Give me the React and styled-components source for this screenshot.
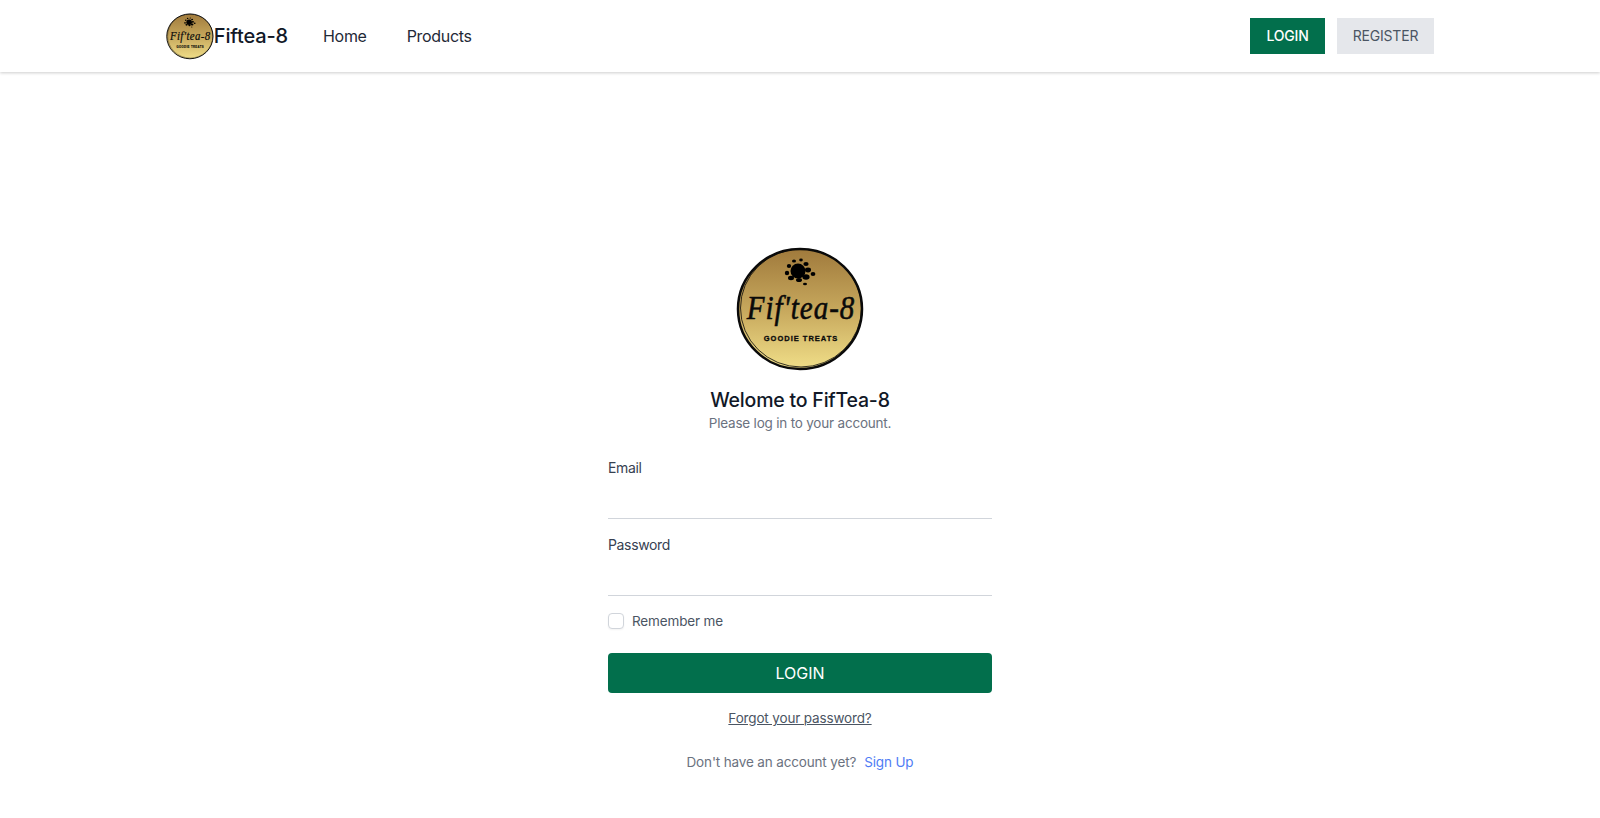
import React from 'react'
import styled, { createGlobalStyle } from 'styled-components'

const GlobalStyle = createGlobalStyle`
  html, body { margin: 0; padding: 0; background: #fff; }
  body { font-family: Inter, "Open Sans", sans-serif; color: #111827; }
  * { box-sizing: border-box; }
`

const Nav = styled.nav`
  height: 72px;
  background: #fff;
  box-shadow: 0 1px 3px 0 rgba(0, 0, 0, 0.2);
`

const NavInner = styled.div`
  width: 1280px;
  height: 100%;
  margin: 0 auto;
  padding: 0 6px;
  display: flex;
  align-items: center;
  justify-content: space-between;
`

const NavLeft = styled.div`
  display: flex;
  align-items: center;
`

const Brand = styled.a`
  display: flex;
  align-items: center;
  width: 122px;
  margin-right: 35px;
  font-size: 20px;
  font-weight: 500;
  letter-spacing: -0.15px;
  white-space: nowrap;
  color: #111827;
`

const NavLink = styled.a`
  font-size: 16px;
  line-height: 22px;
  margin-bottom: 1px;
  letter-spacing: -0.3px;
  color: #1f2937;
  margin-right: 40px;
`

const NavButtons = styled.div`
  display: flex;
  gap: 12px;
`

const NavButton = styled.button`
  height: 36px;
  width: ${p => (p.$primary ? 75 : 97)}px;
  padding: 0 0 1px;
  border: 0;
  font-family: inherit;
  font-size: 14px;
  font-weight: ${p => (p.$primary ? 500 : 400)};
  letter-spacing: -0.2px;
  color: ${p => (p.$primary ? '#fff' : '#4b5563')};
  background: ${p => (p.$primary ? '#026f4c' : '#e5e7eb')};
`

const Main = styled.main`
  width: 384px;
  margin: 172px auto 0;
  display: flex;
  flex-direction: column;
`

const LogoWrap = styled.div`
  display: flex;
  justify-content: center;
  margin-bottom: 15px;
`

const Title = styled.h1`
  margin: 0 0 -1px;
  font-size: 19.5px;
  line-height: 27px;
  font-weight: 500;
  letter-spacing: -0.2px;
  text-align: center;
  color: #111827;
`

const Subtitle = styled.p`
  margin: 0 0 25px;
  font-size: 13.5px;
  line-height: 20px;
  letter-spacing: -0.2px;
  text-align: center;
  color: #6b7280;
`

const Field = styled.div`
  display: flex;
  flex-direction: column;
  margin-bottom: 16px;
`

const Label = styled.label`
  font-size: 14px;
  line-height: 20px;
  letter-spacing: -0.35px;
  color: #374151;
`

const Input = styled.input`
  height: 41px;
  border: 0;
  border-bottom: 1px solid #d1d5db;
  outline: none;
  background: transparent;
`

const RememberRow = styled.label`
  display: flex;
  align-items: center;
  gap: 8px;
  height: 18px;
  font-size: 13.5px;
  line-height: 18px;
  letter-spacing: -0.15px;
  color: #4b5563;
`

const Checkbox = styled.span`
  width: 16px;
  height: 16px;
  border: 1px solid #d1d5db;
  border-radius: 4px;
  background: #fff;
  box-shadow: 0 1px 2px rgba(0, 0, 0, 0.05);
`

const SubmitButton = styled.button`
  height: 40px;
  margin-top: 23px;
  border: 0;
  border-radius: 4px;
  background: #026f4c;
  color: #fff;
  font-family: inherit;
  font-size: 16px;
  font-weight: 400;
`

const Forgot = styled.a`
  align-self: center;
  margin-top: 15px;
  font-size: 13.5px;
  line-height: 20px;
  letter-spacing: -0.15px;
  color: #4b5563;
  text-decoration: underline;
`

const SignupRow = styled.p`
  margin: 24px 0 0;
  font-size: 13.5px;
  line-height: 20px;
  letter-spacing: -0.15px;
  text-align: center;
  color: #6b7280;
`

const SignupLink = styled.a`
  margin-left: 8px;
  color: #4f7cf5;
`

// round gold badge; viewBox is 128 so both sizes share it
const Logo = ({ size, id }) => (
  <svg width={size} height={size} viewBox="0 0 128 128">
    <defs>
      <linearGradient id={id} x1="0" y1="0" x2="0" y2="1">
        <stop offset="0" stopColor="#a07a3c" />
        <stop offset="0.5" stopColor="#c6a75c" />
        <stop offset="1" stopColor="#f0de88" />
      </linearGradient>
    </defs>
    <ellipse cx="64" cy="65" rx="62" ry="60" fill={`url(#${id})`} stroke="#0a0a0a" strokeWidth="2.5" />
    <ellipse cx="65" cy="64" rx="60.5" ry="59" fill="none" stroke="#0a0a0a" strokeWidth="0.8" />
    <g fill="#000">
      <circle cx="62" cy="27" r="7.5" />
      <ellipse cx="70" cy="20" rx="2.6" ry="2" />
      <ellipse cx="72" cy="26" rx="3" ry="2.4" />
      <ellipse cx="70" cy="33" rx="3.6" ry="2.8" />
      <ellipse cx="77" cy="30" rx="2.4" ry="2" />
      <ellipse cx="63" cy="36" rx="3" ry="2" />
      <ellipse cx="55" cy="34" rx="3" ry="2.2" />
      <ellipse cx="51" cy="29" rx="2.2" ry="2.2" />
      <ellipse cx="53" cy="22" rx="2.2" ry="2" />
      <ellipse cx="58" cy="17" rx="2" ry="1.6" />
      <ellipse cx="65" cy="16" rx="1.8" ry="1.4" />
      <ellipse cx="69" cy="40" rx="2" ry="1.2" />
    </g>
    <text
      transform="translate(65 75) scale(1 1.15)"
      textAnchor="middle"
      fontFamily="'Liberation Serif', serif"
      fontStyle="italic"
      fontWeight="400"
      fontSize="29"
      letterSpacing="1"
      fill="#0a0a0a"
      stroke="#0a0a0a"
      strokeWidth="0.5"
    >
      Fif'tea-8
    </text>
    <text
      x="65"
      y="97"
      textAnchor="middle"
      fontFamily="'Liberation Sans', sans-serif"
      fontWeight="700"
      fontSize="7.5"
      letterSpacing="1"
      fill="#0a0a0a"
      stroke="#0a0a0a"
      strokeWidth="0.3"
    >
      GOODIE TREATS
    </text>
  </svg>
)

export default function App() {
  return (
    <>
      <GlobalStyle />
      <Nav>
        <NavInner>
          <NavLeft>
            <Brand>
              <Logo size={48} id="brandGold" />
              Fiftea-8
            </Brand>
            <NavLink>Home</NavLink>
            <NavLink>Products</NavLink>
          </NavLeft>
          <NavButtons>
            <NavButton $primary>LOGIN</NavButton>
            <NavButton>REGISTER</NavButton>
          </NavButtons>
        </NavInner>
      </Nav>
      <Main>
        <LogoWrap>
          <Logo size={128} id="mainGold" />
        </LogoWrap>
        <Title>Welome to FifTea-8</Title>
        <Subtitle>Please log in to your account.</Subtitle>
        <Field>
          <Label>Email</Label>
          <Input type="email" />
        </Field>
        <Field>
          <Label>Password</Label>
          <Input type="password" />
        </Field>
        <RememberRow>
          <Checkbox />
          Remember me
        </RememberRow>
        <SubmitButton>LOGIN</SubmitButton>
        <Forgot>Forgot your password?</Forgot>
        <SignupRow>
          Don't have an account yet?
          <SignupLink>Sign Up</SignupLink>
        </SignupRow>
      </Main>
    </>
  )
}
